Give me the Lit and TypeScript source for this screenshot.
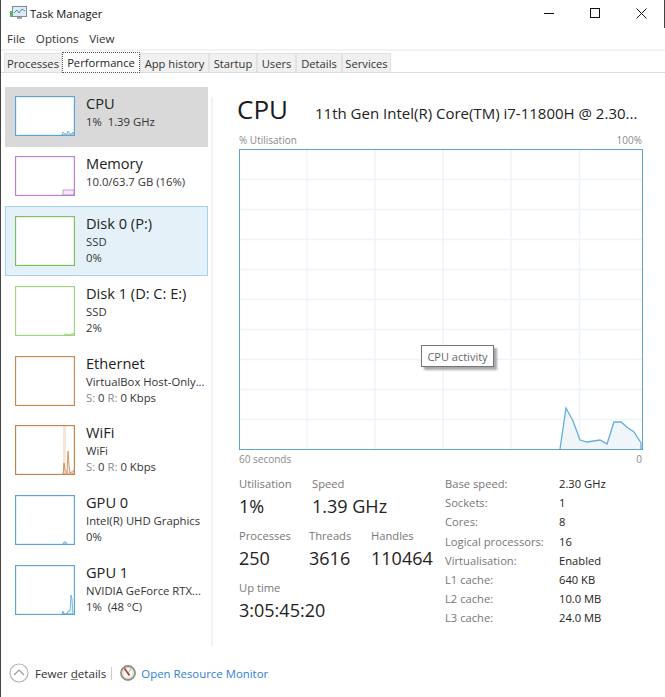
import { LitElement, html, css, svg } from "lit";
import { customElement } from "lit/decorators.js";

type Item = { name: string; l1: string; l2?: string; color: string; h: number; cls?: string; pts?: string; muted?: boolean };

const BLUE = "#5ba5d6";
const items: Item[] = [
  { name: "CPU", l1: "1%\u00a0\u00a01.39 GHz", color: BLUE, h: 40, cls: "sel", pts: "47,39 48,36 50,38 52,38 53,35 55,38 57,38 58,36 60,39" },
  { name: "Memory", l1: "10.0/63.7 GB (16%)", color: "#bd7fdb", h: 40, pts: "48,39 48,34 59,34 59,39" },
  { name: "Disk 0 (P:)", l1: "SSD", l2: "0%", color: "#7cc05c", h: 50, cls: "hot" },
  { name: "Disk 1 (D: C: E:)", l1: "SSD", l2: "2%", color: "#9ed47e", h: 50, pts: "49,49 50,48 52,48 53,49 55,48 57,48 58,47 60,49" },
  { name: "Ethernet", l1: "VirtualBox Host-Only...", l2: "S: 0 R: 0 Kbps", color: "#c98a56", h: 50, muted: true },
  { name: "WiFi", l1: "WiFi", l2: "S: 0 R: 0 Kbps", color: "#c9814a", h: 50, muted: true, pts: "48,49 49,38 50,45 51,46 52,48 53,26 54,40 55,48 56,47 58,47 59,45 60,49" },
  { name: "GPU 0", l1: "Intel(R) UHD Graphics", l2: "0%", color: BLUE, h: 50, pts: "48,49 49,47 51,47 52,49" },
  { name: "GPU 1", l1: "NVIDIA GeForce RTX...", l2: "1%\u00a0\u00a0(48 °C)", color: BLUE, h: 50, pts: "47,49 48,46 49,49 52,49 53,46 55,46 56,30 57,34 58,49" },
];

const tabs: [string, number][] = [["Processes", 58], ["Performance", 78], ["App history", 69], ["Startup", 48], ["Users", 39], ["Details", 46], ["Services", 49]];
const specs: [string, string][] = [
  ["Base speed:", "2.30 GHz"], ["Sockets:", "1"], ["Cores:", "8"], ["Logical processors:", "16"],
  ["Virtualisation:", "Enabled"], ["L1 cache:", "640 KB"], ["L2 cache:", "10.0 MB"], ["L3 cache:", "24.0 MB"],
];
const mainPts = "321,300 327,259 334,272 341,291 348,293 361,291 368,295 375,273 382,273 389,279 395,283 402,294 402,300";

@customElement("app-root")
export class AppRoot extends LitElement {
  static styles = css`
    :host { display: block; width: 665px; height: 697px; overflow: hidden; background: #fff; color: #222; font-family: "Open Sans", "Noto Sans", sans-serif; font-size: 11.4px; }
    .win { box-sizing: border-box; width: 665px; height: 697px; border-left: 1px solid #444; display: flex; flex-direction: column; position: relative; }
    .title { height: 28px; display: flex; align-items: center; flex: none; }
    .appicon { margin-left: 9px; width: 18px; height: 16px; margin-right: 2px; margin-top: -2px; }
    .apptitle { font-size: 11.1px; color: #111; margin-top: -2px; }
    .ctrls { margin-left: auto; display: flex; align-items: center; gap: 35px; margin-right: 18px; margin-top: -2px; }
    .edge { position: absolute; right: 0; top: 0; width: 1px; height: 28px; background: #444; }
    .menu { height: 21px; display: flex; align-items: center; gap: 10.5px; padding-left: 6px; flex: none; border-bottom: 2px solid #f3f3f3; font-size: 11.6px; color: #333; }
    .tabs { height: 22px; display: flex; align-items: flex-end; padding-left: 3px; border-bottom: 1px solid #dedede; flex: none; box-sizing: border-box; }
    .tab { box-sizing: border-box; height: 19px; background: #f0f0f0; border: 1px solid #e2e2e2; border-bottom: none; display: flex; align-items: center; justify-content: center; font-size: 11.2px; color: #333; white-space: nowrap; }
    .tab.active { height: 21px; margin-bottom: -1px; background: #fff; border: 1px dotted #555; color: #222; }
    .body { flex: 1; display: flex; min-height: 0; padding-top: 14px; }
    .side { width: 203px; margin-left: 4px; flex: none; display: flex; flex-direction: column; }
    .item { box-sizing: border-box; height: 69.7px; display: flex; padding: 9px 0 0 9px; border: 1px solid transparent; gap: 11px; }
    .item.short { height: 59.7px; padding-top: 8px; }
    .item.sel { background: #d9d9d9; border-color: #d9d9d9; }
    .item.hot { background: #e4f1f9; border-color: #a5d2ec; }
    .thumb { flex: none; display: block; }
    .itxt { min-width: 0; margin-top: -3px; white-space: nowrap; }
    .iname { font-size: 14.6px; line-height: 21px; color: #222; }
    .il { font-size: 11.3px; line-height: 16px; color: #333; }
    .muted { color: #8a8a8a; }
    .divider { width: 2px; background: #f2f2f2; margin: 10px 0 51px 3px; flex: none; }
    .main { flex: 1; padding-left: 24px; display: flex; flex-direction: column; min-width: 0; }
    .head { display: flex; align-items: baseline; height: 39px; margin-top: 7px; }
    .h-cpu { font-size: 26px; line-height: 30px; width: 78px; color: #1a1a1a; }
    .h-model { font-size: 15px; color: #222; white-space: nowrap; }
    .axis { display: flex; justify-content: space-between; width: 403px; margin-left: 2px; font-size: 10px; line-height: 14px; color: #8a8a8a; }
    .chartwrap { position: relative; margin: 2px 0 0 2px; width: 404px; height: 301px; }
    .chart { display: block; }
    .tip { position: absolute; left: 182px; top: 196px; box-sizing: border-box; height: 22px; width: 73px; border: 1px solid #767676; background: #fff; font-size: 11px; color: #666; display: flex; align-items: center; justify-content: center; box-shadow: 3px 3px 2px #a9a9a9; }
    .axis2 { margin-top: 2px; }
    .stats { display: flex; margin: 10px 0 0 2px; }
    .left { width: 206px; flex: none; }
    .row { display: flex; }
    .lab { font-size: 11.2px; line-height: 15px; color: #777; }
    .val { font-size: 18px; line-height: 26px; margin-top: 2px; color: #222; white-space: nowrap; }
    .blk { margin-bottom: 9px; }
    .w73 { width: 73px; } .w70 { width: 70px; } .w62 { width: 62px; }
    .spec { display: grid; grid-template-columns: 114px auto; grid-auto-rows: 19.2px; font-size: 11.2px; align-items: center; margin-top: -2px; }
    .sl { color: #777; } .sv { color: #222; }
    .foot { position: absolute; left: 0; right: 0; top: 661px; height: 24px; display: flex; align-items: center; }
    .chev { margin-left: 8px; }
    .fewer { margin-left: 6px; font-size: 11.6px; color: #333; }
    .sep { width: 1px; height: 13px; background: #ccc; margin: 0 8px 0 5px; }
    .link { margin-left: 5px; font-size: 11.4px; color: #2f7fd6; }
    u { text-decoration-color: #888; }
  `;

  thumb(i: Item) {
    const h = i.h;
    return html`<svg class="thumb" width="60" height=${h} viewBox="0 0 60 ${h}">
      <rect x="0.5" y="0.5" width="59" height=${h - 1} fill="#fff" stroke=${i.color} stroke-width="1.3"></rect>
      ${i.pts ? svg`<polygon points=${i.pts} fill=${i.color} fill-opacity="0.15" stroke=${i.color} stroke-width="0.8"></polygon>` : ""}
      ${i.name === "WiFi" ? svg`<rect x="48" y="1" width="3" height="48" fill="#c9814a" fill-opacity="0.2"></rect>` : ""}
    </svg>`;
  }

  second(t: string, m?: boolean) {
    if (!m) return html`<div class="il">${t}</div>`;
    return html`<div class="il"><span class="muted">S:</span> 0 <span class="muted">R:</span> 0 Kbps</div>`;
  }

  grid() {
    const v = [1, 2, 3, 4, 5].map((k) => svg`<line x1=${k * 68.2 - 0.5} x2=${k * 68.2 - 0.5} y1="0" y2="301" stroke="#eef4f9" stroke-width="1.5"></line>`);
    const hh = [1, 2, 3, 4, 5, 6, 7, 8, 9].map((k) => svg`<line y1=${k * 30 + 0.5} y2=${k * 30 + 0.5} x1="0" x2="404" stroke="#eef4f9" stroke-width="1.5"></line>`);
    return [v, hh];
  }

  render() {
    return html`<div class="win">
      <div class="edge"></div>
      <div class="title">
        <svg class="appicon" viewBox="0 0 18 16">
          <rect x="2.5" y="1.5" width="14" height="10" fill="#dfeaf2" stroke="#7d8b96"></rect>
          <polyline points="4,8 7,5 9,8 12,4 15,6" fill="none" stroke="#3d93cc" stroke-width="1"></polyline>
          <rect x="0" y="6" width="3" height="6" fill="#5fae6a"></rect>
          <rect x="7" y="12" width="5" height="2" fill="#9aa5ad"></rect>
        </svg>
        <span class="apptitle">Task Manager</span>
        <div class="ctrls">
          <svg width="11" height="11" viewBox="0 0 11 11"><line x1="0" x2="10" y1="5.5" y2="5.5" stroke="#111"></line></svg>
          <svg width="11" height="11" viewBox="0 0 11 11"><rect x="0.5" y="0.5" width="9" height="9" fill="none" stroke="#111"></rect></svg>
          <svg width="11" height="11" viewBox="0 0 11 11"><path d="M0.5 0.5L10.5 10.5M10.5 0.5L0.5 10.5" stroke="#111" fill="none"></path></svg>
        </div>
      </div>
      <div class="menu"><span>File</span><span>Options</span><span>View</span></div>
      <div class="tabs">
        ${tabs.map(([t, w], i) => html`<div class="tab ${i === 1 ? "active" : ""}" style="width:${w}px">${t}</div>`)}
      </div>
      <div class="body">
        <div class="side">
          ${items.map((i) => html`<div class="item ${i.cls ?? ""} ${i.l2 ? "" : "short"}">
            ${this.thumb(i)}
            <div class="itxt">
              <div class="iname">${i.name}</div>
              <div class="il">${i.l1}</div>
              ${i.l2 ? this.second(i.l2, i.muted) : ""}
            </div>
          </div>`)}
        </div>
        <div class="divider"></div>
        <div class="main">
          <div class="head"><span class="h-cpu">CPU</span><span class="h-model">11th Gen Intel(R) Core(TM) i7-11800H @ 2.30...</span></div>
          <div class="axis"><span>% Utilisation</span><span>100%</span></div>
          <div class="chartwrap">
            <svg class="chart" width="404" height="301" viewBox="0 0 404 301">
              <rect width="404" height="301" fill="#fff"></rect>
              ${this.grid()}
              <polygon points=${mainPts} fill="#f0f5fa" stroke="none"></polygon>
              <polyline points=${mainPts} fill="none" stroke="#64aedb" stroke-width="1.3"></polyline>
              <rect x="0.5" y="0.5" width="403" height="300" fill="none" stroke="#5ba5d6"></rect>
            </svg>
            <div class="tip">CPU activity</div>
          </div>
          <div class="axis axis2"><span>60 seconds</span><span>0</span></div>
          <div class="stats">
            <div class="left">
              <div class="row blk">
                <div class="w73"><div class="lab">Utilisation</div><div class="val">1%</div></div>
                <div><div class="lab">Speed</div><div class="val">1.39 GHz</div></div>
              </div>
              <div class="row blk">
                <div class="w70"><div class="lab">Processes</div><div class="val">250</div></div>
                <div class="w62"><div class="lab">Threads</div><div class="val">3616</div></div>
                <div><div class="lab">Handles</div><div class="val">110464</div></div>
              </div>
              <div><div class="lab">Up time</div><div class="val">3:05:45:20</div></div>
            </div>
            <div class="spec">
              ${specs.map(([a, b]) => html`<span class="sl">${a}</span><span class="sv">${b}</span>`)}
            </div>
          </div>
        </div>
      </div>
      <div class="foot">
        <svg class="chev" width="20" height="20" viewBox="0 0 20 20">
          <circle cx="10" cy="10" r="9" fill="#fff" stroke="#b5b5b5" stroke-width="1.2"></circle>
          <polyline points="5,12 10,7 15,12" fill="none" stroke="#9a9a9a" stroke-width="1.2"></polyline>
        </svg>
        <span class="fewer">Fewer <u>d</u>etails</span>
        <span class="sep"></span>
        <svg width="16" height="16" viewBox="0 0 16 16">
          <circle cx="8" cy="8" r="7" fill="#f2f0ec" stroke="#8f8f86" stroke-width="1.8"></circle>
          <circle cx="8" cy="8" r="4.8" fill="#fff" stroke="#c9c9c2" stroke-width="0.6"></circle>
          <line x1="4.5" y1="3.5" x2="9.5" y2="10.5" stroke="#c8322d" stroke-width="1.7"></line>
          <line x1="11" y1="4" x2="8" y2="8" stroke="#777" stroke-width="0.7"></line>
        </svg>
        <span class="link">Open Resource Monitor</span>
      </div>
    </div>`;
  }
}
